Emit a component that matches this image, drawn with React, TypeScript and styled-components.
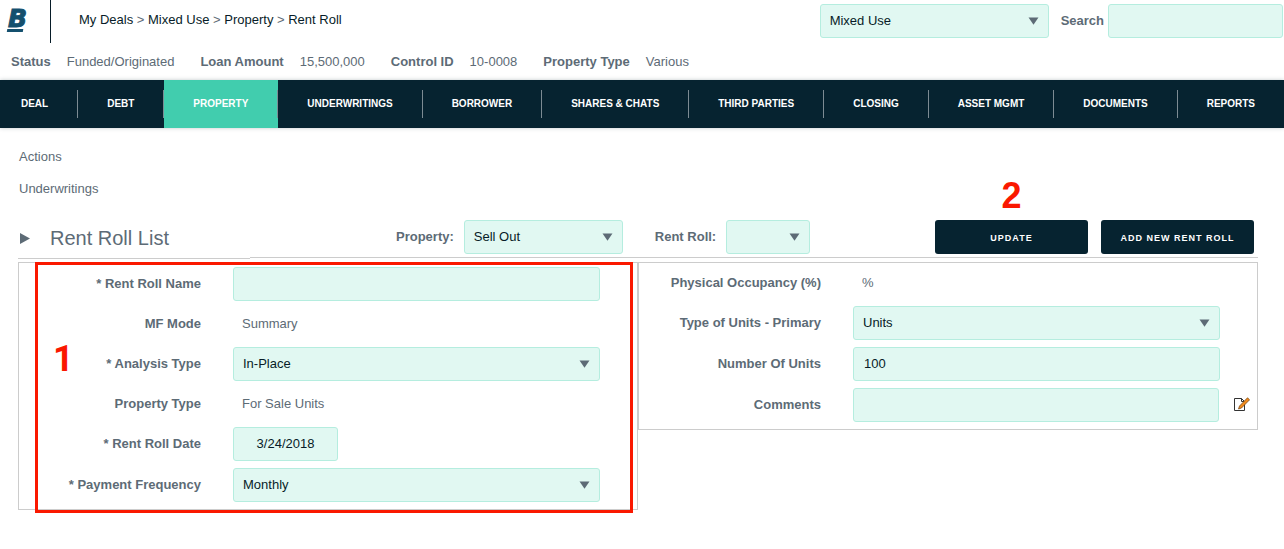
import React from "react";
import styled, { createGlobalStyle, css } from "styled-components";

const color = {
  ink: "#071c28",
  navy: "#062330",
  teal: "#41cdae",
  gray: "#5d6b76",
  line: "#cccccc",
  field: "#e1f8f2",
  fieldLine: "#b5eddf",
  mark: "#fa1800",
};

const GlobalStyle = createGlobalStyle`
  *, *::before, *::after { box-sizing: border-box; }
  body {
    margin: 0;
    background: #fff;
    color: ${color.gray};
    font: 13px/16px "Liberation Sans", Arial, sans-serif;
  }
  a { color: inherit; text-decoration: none; }
`;

const Header = styled.header`
  display: flex;
  align-items: flex-start;
  height: 43px;
  padding-right: 1px;
`;

const HeaderTools = styled.div`
  display: flex;
  align-items: center;
  padding-top: 4px;
`;

const LogoLink = styled.a`
  width: 51px;
  height: 43px;
  border-right: 1px solid ${color.ink};
`;

const Breadcrumb = styled.nav`
  margin: 0 auto 0 28px;
  padding-top: 12px;
  a { color: ${color.ink}; }
`;

const SearchLabel = styled.label`
  font-weight: bold;
  margin: 0 4px 0 12px;
`;

const fieldStyle = css`
  width: 100%;
  height: 34px;
  padding: 0 10px;
  border: 1px solid ${color.fieldLine};
  border-radius: 3px;
  background: ${color.field};
  color: ${color.ink};
  font: inherit;
  appearance: none;
  outline: none;
`;

const TextInput = styled.input<{ $width?: string; $center?: boolean }>`
  ${fieldStyle}
  display: block;
  padding-bottom: 2px;
  width: ${(p) => p.$width ?? "100%"};
  text-align: ${(p) => (p.$center ? "center" : "left")};
`;

const SelectWrap = styled.span<{ $width?: string }>`
  position: relative;
  display: block;
  width: ${(p) => p.$width ?? "100%"};
  flex-shrink: 0;
`;

const NativeSelect = styled.select`
  ${fieldStyle}
  display: block;
  padding-left: 9px;
  padding-right: 28px;
`;

const SelectArrow = styled.svg`
  position: absolute;
  right: 10px;
  top: 13px;
  pointer-events: none;
`;

function Select({ id, value, width, label }: { id: string; value: string; width?: string; label?: string }) {
  return (
    <SelectWrap $width={width}>
      <NativeSelect id={id} defaultValue={value} aria-label={label}>
        <option value={value}>{value}</option>
      </NativeSelect>
      <SelectArrow width="11" height="8" viewBox="0 0 11 8" aria-hidden="true">
        <path d="M0.5 0.5H10.5L5.5 7.8Z" fill={color.gray} />
      </SelectArrow>
    </SelectWrap>
  );
}

const StatusBar = styled.dl`
  display: flex;
  align-items: center;
  height: 37px;
  margin: 0;
  padding-left: 11px;
  dt { font-weight: bold; }
  dd { margin: 0 26px 0 16px; }
`;

const MainNav = styled.nav`
  display: flex;
  height: 48px;
  background: ${color.navy};
  box-shadow: 0 0 4px rgba(6, 35, 48, 0.25);
`;

const NavLink = styled.a<{ $active?: boolean }>`
  display: flex;
  align-items: center;
  flex: 1 1 auto;
  background: ${(p) => (p.$active ? color.teal : "transparent")};
  color: #fff;
  font-size: 10px;
  font-weight: bold;
  white-space: nowrap;
  span {
    flex: 1;
    padding: 0 20px;
    text-align: center;
    line-height: 28px;
    border-right: 1px solid #7c8b93;
  }
  &:first-child span { padding-left: 12px; }
  &:last-child span { border-right: 0; }
`;

const Content = styled.main`
  padding: 21px 26px 36px 18px;
`;

const SideLink = styled.a`
  display: block;
  width: fit-content;
  margin-left: 1px;
  padding-bottom: 16px;
`;

const TitleBar = styled.div`
  display: flex;
  align-items: flex-start;
  padding-top: 7px;
`;

const Title = styled.h1`
  display: flex;
  align-items: center;
  gap: 20px;
  flex: 0 0 232px;
  height: 39px;
  margin: 0;
  padding: 0 0 2px 2px;
  border-bottom: 1px solid ${color.line};
  font-size: 20px;
  font-weight: normal;
`;

const Tools = styled.div`
  display: flex;
  align-items: flex-start;
  flex: 1;
  height: 38px;
  padding: 0 4px 0 146px;
  border-bottom: 1px solid ${color.line};
`;

const ToolLabel = styled.label`
  margin-right: 10px;
  font-weight: bold;
  line-height: 34px;
  white-space: nowrap;
  span + & { margin-left: 32px; }
`;

const Buttons = styled.div`
  display: flex;
  gap: 13px;
  margin-left: auto;
`;

const Button = styled.button`
  position: relative;
  width: 153px;
  height: 34px;
  padding: 1px 0 0;
  border: 0;
  border-radius: 3px;
  background: ${color.navy};
  color: #fff;
  font: bold 9px/16px "Liberation Sans", Arial, sans-serif;
  letter-spacing: 1px;
`;

const Panels = styled.div`
  display: grid;
  grid-template-columns: 1fr 1fr;
  align-items: start;
  margin-top: 3px;
`;

const Panel = styled.form`
  position: relative;
  padding: 1px 0 3px;
  border: 1px solid ${color.line};
`;

const Row = styled.div<{ $text?: boolean; $icon?: boolean }>`
  display: grid;
  grid-template-columns: ${(p) => (p.$icon ? "182px 1fr 16px" : "182px 1fr")};
  align-items: center;
  height: ${(p) => (p.$text ? 39 : 41)}px;
  padding: 0 ${(p) => (p.$icon ? 7 : 37)}px 1px 0;
`;

const RowLabel = styled.label`
  font-weight: bold;
  text-align: right;
`;

const RowField = styled.div<{ $icon?: boolean }>`
  padding-left: 32px;
  padding-right: ${(p) => (p.$icon ? 15 : 0)}px;
`;

const RowText = styled.output`
  padding-left: 41px;
`;

const IconButton = styled.button`
  display: block;
  padding: 0;
  border: 0;
  background: none;
  svg { display: block; }
`;

const markStyle = css`
  position: absolute;
  color: ${color.mark};
  letter-spacing: 0;
  pointer-events: none;
`;

const Highlight = styled.div`
  position: absolute;
  inset: -1px 4px -4px 16px;
  border: 3px solid ${color.mark};
  pointer-events: none;
`;

const StepOne = styled.span`
  ${markStyle}
  left: 15px;
  top: 76px;
  font: bold 36px/36px Roboto, "Liberation Sans", sans-serif;
`;

const StepTwo = styled.span`
  ${markStyle}
  left: 0;
  right: 0;
  top: -42px;
  font: bold 36px/36px "Liberation Sans", Arial, sans-serif;
  text-align: center;
`;

const navItems = [
  "DEAL", "DEBT", "PROPERTY", "UNDERWRITINGS", "BORROWER", "SHARES & CHATS",
  "THIRD PARTIES", "CLOSING", "ASSET MGMT", "DOCUMENTS", "REPORTS",
];

const status = [
  ["Status", "Funded/Originated"],
  ["Loan Amount", "15,500,000"],
  ["Control ID", "10-0008"],
  ["Property Type", "Various"],
];

export default function App() {
  return (
    <>
      <GlobalStyle />
      <Header>
        <LogoLink href="#" aria-label="Home">
          <svg width="34" height="40" viewBox="0 0 34 40">
            <text x="8" y="26.5" fill="#14506e" stroke="#14506e" strokeWidth="1" fontFamily="DejaVu Sans, sans-serif" fontSize="25" fontWeight="bold" fontStyle="italic">B</text>
            <path d="M7.3 29H23.3L22.8 32H6.8Z" fill="#14506e" />
          </svg>
        </LogoLink>
        <Breadcrumb>
          <a href="#">My Deals</a> &gt; <a href="#">Mixed Use</a> &gt; <a href="#">Property</a> &gt; <a href="#">Rent Roll</a>
        </Breadcrumb>
        <HeaderTools>
          <Select id="deal" value="Mixed Use" width="229px" label="Deal" />
          <SearchLabel htmlFor="search">Search</SearchLabel>
          <TextInput id="search" $width="175px" />
        </HeaderTools>
      </Header>
      <StatusBar>
        {status.map(([name, value]) => (
          <React.Fragment key={name}>
            <dt>{name}</dt>
            <dd>{value}</dd>
          </React.Fragment>
        ))}
      </StatusBar>
      <MainNav>
        {navItems.map((item) => (
          <NavLink key={item} href="#" $active={item === "PROPERTY"}>
            <span>{item}</span>
          </NavLink>
        ))}
      </MainNav>
      <Content>
        <SideLink href="#">Actions</SideLink>
        <SideLink href="#">Underwritings</SideLink>
        <TitleBar>
          <Title>
            <svg width="10" height="11" viewBox="0 0 10 11" aria-hidden="true">
              <path d="M0 0L10 5.5L0 11Z" fill={color.gray} />
            </svg>
            Rent Roll List
          </Title>
          <Tools>
            <ToolLabel htmlFor="property">Property:</ToolLabel>
            <Select id="property" value="Sell Out" width="159px" />
            <ToolLabel htmlFor="rentroll">Rent Roll:</ToolLabel>
            <Select id="rentroll" value="" width="84px" />
            <Buttons>
              <Button type="button">UPDATE<StepTwo>2</StepTwo></Button>
              <Button type="button">ADD NEW RENT ROLL</Button>
            </Buttons>
          </Tools>
        </TitleBar>
        <Panels>
          <Panel>
            <Row>
              <RowLabel htmlFor="name">* Rent Roll Name</RowLabel>
              <RowField><TextInput id="name" /></RowField>
            </Row>
            <Row $text>
              <RowLabel htmlFor="mode">MF Mode</RowLabel>
              <RowText id="mode">Summary</RowText>
            </Row>
            <Row>
              <RowLabel htmlFor="analysis">* Analysis Type</RowLabel>
              <RowField><Select id="analysis" value="In-Place" /></RowField>
            </Row>
            <Row $text>
              <RowLabel htmlFor="ptype">Property Type</RowLabel>
              <RowText id="ptype">For Sale Units</RowText>
            </Row>
            <Row>
              <RowLabel htmlFor="date">* Rent Roll Date</RowLabel>
              <RowField><TextInput id="date" defaultValue="3/24/2018" $width="105px" $center /></RowField>
            </Row>
            <Row>
              <RowLabel htmlFor="freq">* Payment Frequency</RowLabel>
              <RowField><Select id="freq" value="Monthly" /></RowField>
            </Row>
            <Highlight><StepOne>1</StepOne></Highlight>
          </Panel>
          <Panel>
            <Row $text>
              <RowLabel htmlFor="occupancy">Physical Occupancy (%)</RowLabel>
              <RowText id="occupancy">%</RowText>
            </Row>
            <Row>
              <RowLabel htmlFor="units">Type of Units - Primary</RowLabel>
              <RowField><Select id="units" value="Units" /></RowField>
            </Row>
            <Row>
              <RowLabel htmlFor="count">Number Of Units</RowLabel>
              <RowField><TextInput id="count" defaultValue="100" /></RowField>
            </Row>
            <Row $icon>
              <RowLabel htmlFor="comments">Comments</RowLabel>
              <RowField $icon><TextInput id="comments" /></RowField>
              <IconButton type="button" aria-label="Edit comments">
                <svg width="16" height="16" viewBox="0 0 16 16">
                  <path d="M0.5 1.5H7.5L10.5 4.5V13.5H0.5Z" fill="#fff" stroke="#333" />
                  <path d="M7.5 1.5V4.5H10.5" fill="none" stroke="#333" />
                  <path d="M4.5 12L5.5 9L13.5 0.8L15.6 2.8L7.5 11Z" fill="#f08a1c" stroke="#6b3d0c" strokeWidth="0.7" />
                </svg>
              </IconButton>
            </Row>
          </Panel>
        </Panels>
      </Content>
    </>
  );
}
